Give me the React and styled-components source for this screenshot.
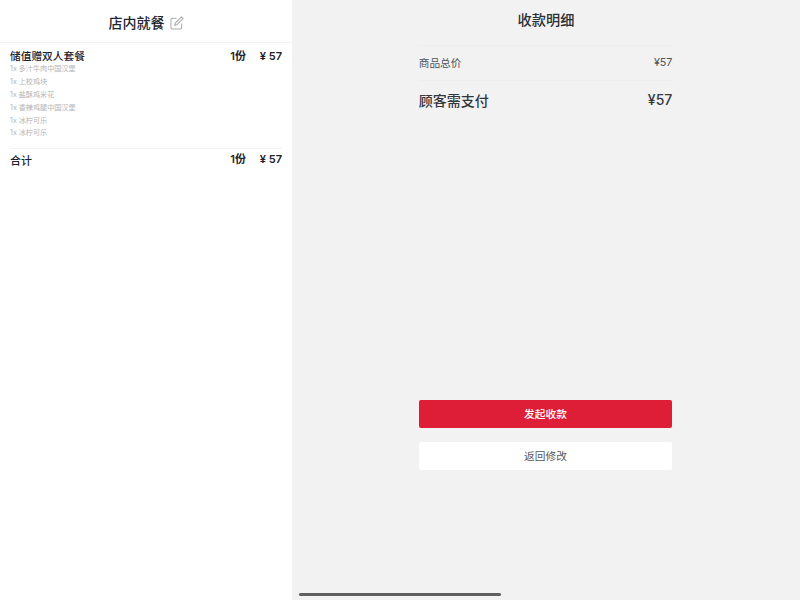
import React from 'react';
import styled, { createGlobalStyle } from 'styled-components';

const subItems = ['多汁牛肉中国汉堡', '上校鸡块', '盐酥鸡米花', '香辣鸡腿中国汉堡', '冰柠可乐', '冰柠可乐'];

const App = () => {
  return (
    <Page>
      <GlobalStyle />
      <OrderPanel>
        <OrderHeader>
          <OrderTitle>店内就餐</OrderTitle>
          <svg width="14" height="14" viewBox="0 0 15 15" fill="none" stroke="#a9a9a9" strokeWidth="1.1">
            <path d="M12.5 8v4.6a1.4 1.4 0 0 1-1.4 1.4H2.4A1.4 1.4 0 0 1 1 12.6V3.9a1.4 1.4 0 0 1 1.4-1.4H7" />
            <path d="M12.2 1l1.8 1.8-6.6 6.6-2.3.5.5-2.3z" />
          </svg>
        </OrderHeader>
        <OrderBody>
          <ItemRow>
            <ItemName>储值赠双人套餐</ItemName>
            <Qty>1份</Qty>
            <Price>¥ 57</Price>
          </ItemRow>
          <SubList>
            {subItems.map((name, i) => (
              <SubItem key={i}>
                <SubCount>1x</SubCount>
                {name}
              </SubItem>
            ))}
          </SubList>
          <TotalRow>
            <TotalLabel>合计</TotalLabel>
            <Qty>1份</Qty>
            <Price>¥ 57</Price>
          </TotalRow>
        </OrderBody>
      </OrderPanel>
      <PayPanel>
        <PayTitle>收款明细</PayTitle>
        <PayContent>
          <GoodsRow>
            <span>商品总价</span>
            <span>¥57</span>
          </GoodsRow>
          <DueRow>
            <span>顾客需支付</span>
            <span>¥57</span>
          </DueRow>
          <Actions>
            <PrimaryButton>发起收款</PrimaryButton>
            <SecondaryButton>返回修改</SecondaryButton>
          </Actions>
        </PayContent>
        <HomeBar />
      </PayPanel>
    </Page>
  );
};

const GlobalStyle = createGlobalStyle`
  html, body {
    margin: 0;
    padding: 0;
  }
  body {
    font-family: 'Inter', 'Noto Sans CJK SC', sans-serif;
    color: #222831;
    overflow: hidden;
  }
`;

const Page = styled.div`
  display: flex;
  width: 800px;
  height: 600px;
  background-color: #f2f2f2;
`;

const OrderPanel = styled.section`
  width: 292px;
  height: 600px;
  background-color: #ffffff;
`;

const OrderHeader = styled.header`
  display: flex;
  justify-content: center;
  align-items: center;
  gap: 5px;
  height: 43px;
  border-bottom: 1px solid #f2f2f2;
  padding-top: 3px;
  box-sizing: border-box;
`;

const OrderTitle = styled.h1`
  margin: 0;
  font-size: 14px;
  font-weight: 500;
  line-height: 20px;
`;

const OrderBody = styled.div`
  padding: 6px 10px 0;
`;

const ItemRow = styled.div`
  display: flex;
  align-items: center;
  height: 14px;
  font-size: 10.7px;
  font-weight: 500;
  color: #1d2129;
`;

const ItemName = styled.span`
  flex: 1;
  margin-bottom: 2px;
`;

const Qty = styled.span`
  font-weight: 600;
  font-size: 11px;
  margin-bottom: 2px;
`;

const Price = styled.span`
  width: 36px;
  text-align: right;
  font-weight: 600;
  font-size: 11px;
`;

const SubList = styled.ul`
  list-style: none;
  margin: 0.4px 0 0;
  padding: 0;
`;

const SubItem = styled.li`
  height: 12.8px;
  line-height: 12.8px;
  font-size: 7.1px;
  color: #b4b4b4;
`;

const SubCount = styled.span`
  margin-right: 2px;
`;

const TotalRow = styled.div`
  display: flex;
  align-items: center;
  height: 20px;
  margin-top: 7.6px;
  border-top: 1px solid #f2f2f2;
  font-size: 11px;
  color: #1d2129;
`;

const TotalLabel = styled.span`
  flex: 1;
  font-weight: 500;
  padding-top: 3px;
`;

const PayPanel = styled.section`
  position: relative;
  flex: 1;
  display: flex;
  flex-direction: column;
  align-items: center;
`;

const PayTitle = styled.h2`
  margin: 0;
  height: 45px;
  line-height: 40px;
  font-size: 14.2px;
  font-weight: 500;
  color: #2b2f36;
`;

const PayContent = styled.div`
  flex: 1;
  display: flex;
  flex-direction: column;
  width: 253.6px;
  margin-right: 1px;
`;

const GoodsRow = styled.div`
  display: flex;
  justify-content: space-between;
  align-items: center;
  height: 32px;
  padding-bottom: 2px;
  border-top: 1px solid #eeeeee;
  border-bottom: 1px solid #eeeeee;
  font-size: 10.7px;
  color: #4e5358;
`;

const DueRow = styled.div`
  display: flex;
  justify-content: space-between;
  align-items: center;
  height: 37px;
  font-size: 14px;
  font-weight: 500;
  color: #33383f;
`;

const Actions = styled.div`
  display: flex;
  flex-direction: column;
  gap: 14px;
  margin-top: 282px;
`;

const ActionButton = styled.button`
  height: 28px;
  padding: 0 0 2px;
  border: none;
  border-radius: 2px;
  font-family: inherit;
  font-size: 10.7px;
`;

const PrimaryButton = styled(ActionButton)`
  background-color: #dd1e36;
  color: #ffffff;
  font-weight: 500;
`;

const SecondaryButton = styled(ActionButton)`
  background-color: #ffffff;
  color: #55585c;
`;

const HomeBar = styled.div`
  position: absolute;
  left: 7px;
  bottom: 4px;
  width: 202px;
  height: 3px;
  border-radius: 2px;
  background-color: #5f5f60;
`;

export default App;
